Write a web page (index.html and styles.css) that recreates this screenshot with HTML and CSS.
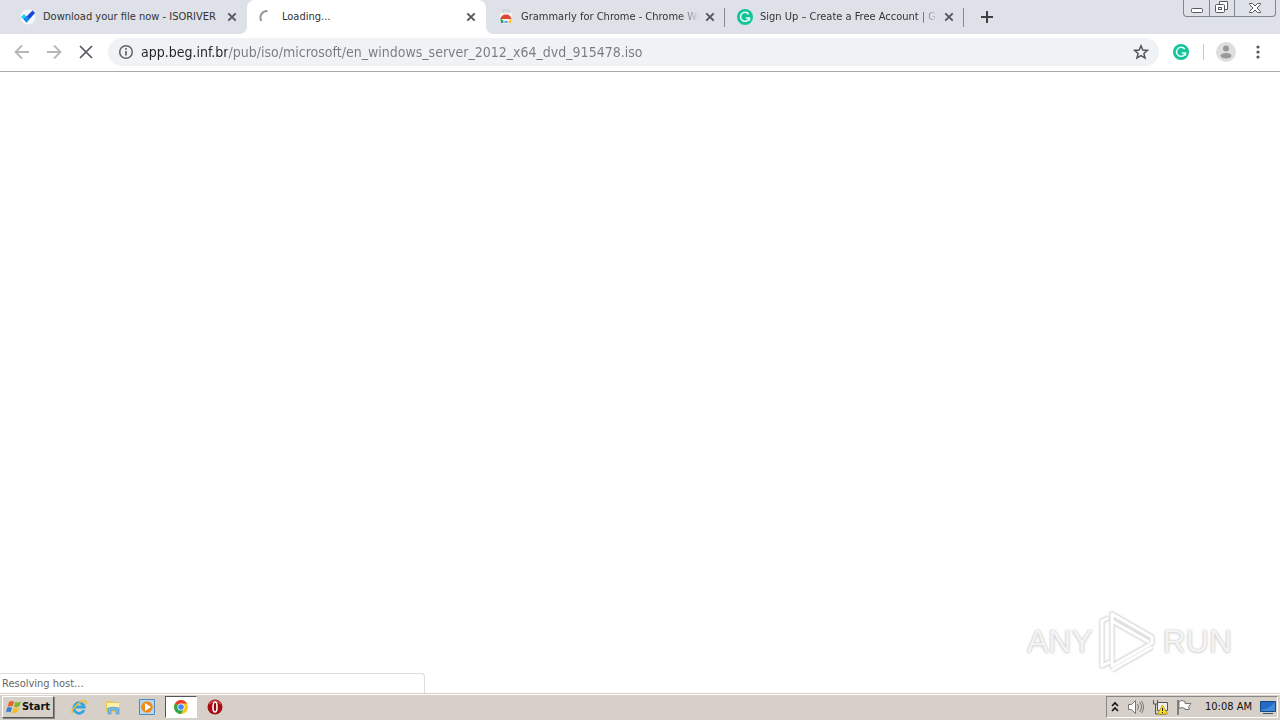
FILE: index.html
```html
<!DOCTYPE html>
<html lang="en">
<head>
<meta charset="utf-8">
<title>Loading...</title>
<link rel="stylesheet" href="styles.css">
</head>
<body>
<svg class="defs" aria-hidden="true">
  <symbol id="close" viewBox="0 0 10 10"><path d="M1.3 1.3 8.7 8.7M8.7 1.3 1.3 8.7" stroke="#51565c" stroke-width="1.9"/></symbol>
  <symbol id="grammarly" viewBox="0 0 16 16"><circle cx="8" cy="8" r="8" fill="#15c39a"/><path d="M11.7 5.2A4.5 4.5 0 1 0 12.4 9H8.8M12.4 8.5v3.2" fill="none" stroke="#e9fff8" stroke-width="1.5"/></symbol>
  <symbol id="chrome" viewBox="0 0 16 16"><circle cx="8" cy="8" r="7" fill="#fbc816"/><path d="M8 8 2 4.500A7 7 0 0 1 14 4.500H8Z" fill="#e53d30"/><path d="M8 8 2 4.500A7 7 0 0 0 8 15l3-5.200Z" fill="#2da44e"/><circle cx="8" cy="8" r="3.6" fill="#fff"/><circle cx="8" cy="8" r="2.8" fill="#4285f4"/></symbol>
</svg>
<header>
  <div class="tabstrip">
    <div class="tab">
      <svg class="favicon" viewBox="0 0 16 16"><circle cx="8" cy="8" r="7.5" fill="#f4f7fa"/><path d="m1 8 3-3 3 3-1 5Z" fill="#20cdf5"/><path d="m4 10 8.5-8.5L15 4 6.5 13.5Z" fill="#1746d8"/><path d="m4 10 3-3 2.5 2.8-3 3.7Z" fill="#1589ee"/></svg>
      <span class="title">Download your file now - ISORIVER</span>
      <button class="close" aria-label="Close tab"><svg><use href="#close"/></svg></button>
    </div>
    <div class="tab active">
      <svg class="favicon" viewBox="0 0 16 16"><path d="M2.5 12A6.5 6.5 0 0 1 8.5 2" fill="none" stroke="#999" stroke-width="2"/></svg>
      <span class="title">Loading...</span>
      <button class="close" aria-label="Close tab"><svg><use href="#close"/></svg></button>
    </div>
    <div class="tab divided">
      <svg class="favicon" viewBox="0 0 16 16"><path d="M5 4V1h6v3" fill="none" stroke="#ccc"/><path d="M2 4h12l-1 10H3Z" fill="#f5f5f5"/><path d="M2.500 10a5.600 5.600 0 0 1 11 0Z" fill="#df4634"/><path d="M2.400 9 8 14H3Z" fill="#29a65a"/><path d="M13.600 9 8 14h5Z" fill="#f9c52b"/><path d="M5.500 14a2.500 2.500 0 0 1 5 0Z" fill="#4285f4" stroke="#fff" stroke-width=".7"/></svg>
      <span class="title fade">Grammarly for Chrome - Chrome Web Store</span>
      <button class="close" aria-label="Close tab"><svg><use href="#close"/></svg></button>
    </div>
    <div class="tab divided">
      <svg class="favicon"><use href="#grammarly"/></svg>
      <span class="title fade">Sign Up – Create a Free Account | Grammarly</span>
      <button class="close" aria-label="Close tab"><svg><use href="#close"/></svg></button>
    </div>
    <button class="newtab" aria-label="New tab"><svg viewBox="0 0 12 12"><path d="M6 0v12M0 6h12" stroke="#3c4043" stroke-width="2"/></svg></button>
    <div class="caption">
      <button aria-label="Minimize"><svg viewBox="0 0 24 16"><rect x="6.5" y="8.5" width="11" height="4" rx="1" fill="#fff" stroke="#555b66"/></svg></button>
      <button aria-label="Restore"><svg viewBox="0 0 24 16"><path d="M9.5 4V1.500h8v8H15" fill="#fff" stroke="#555b66"/><rect x="5.500" y="4.500" width="9" height="8" rx="1" fill="#fff" stroke="#555b66"/><rect x="8.500" y="7.500" width="3" height="2" fill="#fff" stroke="#555b66"/></svg></button>
      <button class="wide" aria-label="Close"><svg viewBox="0 0 24 16"><path d="M6.500 3.500H9.500l2.500 2.500 2.500-2.500h3v1L14 8l3.500 3.500v1h-3L12 10l-2.500 2.500h-3v-1L10 8 6.500 4.500Z" fill="#fff" stroke="#555b66"/></svg></button>
    </div>
  </div>
  <div class="toolbar">
    <button aria-label="Back"><svg viewBox="0 0 16 16"><path d="M15 8H2M8 1.500 1.500 8 8 14.500" fill="none" stroke="#b5b7b9" stroke-width="1.800"/></svg></button>
    <button aria-label="Forward"><svg viewBox="0 0 16 16"><path d="M1 8h13M8 1.500 14.500 8 8 14.500" fill="none" stroke="#b5b7b9" stroke-width="1.800"/></svg></button>
    <button aria-label="Stop"><svg viewBox="0 0 16 16"><path d="m2 2 12 12M14 2 2 14" stroke="#55585c" stroke-width="1.700"/></svg></button>
    <div class="omnibox">
      <button aria-label="Site information"><svg viewBox="0 0 16 16"><circle cx="8" cy="8" r="6.300" fill="none" stroke="#5f6368" stroke-width="1.500"/><path d="M8 7v4.500M8 4v1.700" stroke="#5f6368" stroke-width="1.700"/></svg></button>
      <input class="url" type="text" aria-label="Address" value="app.beg.inf.br/pub/iso/microsoft/en_windows_server_2012_x64_dvd_915478.iso">
      <button aria-label="Bookmark"><svg viewBox="0 0 16 16"><path d="m8 1.800 1.800 4.200 4.600.4-3.500 3 1.100 4.500L8 11.500l-4 2.400 1.100-4.500-3.500-3 4.600-.4Z" fill="none" stroke="#50545a" stroke-width="1.500"/></svg></button>
    </div>
    <button class="extension" aria-label="Grammarly"><svg><use href="#grammarly"/></svg></button>
    <span class="rule"></span>
    <button class="profile" aria-label="Profile"><svg viewBox="0 0 20 20"><circle cx="10" cy="10" r="10" fill="#dedede"/><circle cx="10" cy="6.500" r="3" fill="#999"/><ellipse cx="10" cy="13.800" rx="5.500" ry="2.800" fill="#999"/></svg></button>
    <button aria-label="Menu"><svg viewBox="0 0 16 16" fill="#55585c"><circle cx="8" cy="3" r="1.600"/><circle cx="8" cy="8" r="1.600"/><circle cx="8" cy="13" r="1.600"/></svg></button>
  </div>
</header>
<main>
  <div class="watermark"><span>ANY</span>
    <svg viewBox="0 0 60 64"><g fill="none" stroke-linejoin="round"><g stroke="#dedede" stroke-width="5"><path d="M14 50V5l40 23v6L14 57Z"/><path d="M14 12 51 33M10 9 4 12v45l8-4M14 61 54 38"/></g><g stroke="#fff" stroke-width="3"><path d="M14 50V5l40 23v6L14 57Z"/><path d="M14 12 51 33M10 9 4 12v45l8-4M14 61 54 38"/></g></g></svg>
    <span>RUN</span></div>
  <div class="status">Resolving host...</div>
</main>
<footer>
  <button class="start"><svg viewBox="0 0 16 16"><path d="M3 3q3-2 5 0L6.500 7.500q-2-1-5 .5Z" fill="#e66031"/><path d="M9 3q3 1 6-.5L13.500 7q-3 2-5.500.5Z" fill="#81b72c"/><path d="M1 9q3-2 5 0l-1.500 4.500q-2-1.500-4.500 0Z" fill="#3a80cf"/><path d="M7.500 8.500q3 1.500 5.500 0L11.500 13q-3 2-5.500.5Z" fill="#f7bd26"/></svg>Start</button>
  <nav>
    <button aria-label="Internet Explorer"><svg viewBox="0 0 16 16"><path d="M13 11a5.300 5.300 0 1 1 .3-3H4" fill="none" stroke="#35a5df" stroke-width="2.800"/><path d="M1.500 14.500C-1 11 11-1 15 2.500q1 1-.5 3" fill="none" stroke="#e9bd37" stroke-width="1.400"/></svg></button>
    <button aria-label="Explorer"><svg viewBox="0 0 16 16"><path d="M1 2h5l1 1h7v10H1Z" fill="#e8c75b"/><path d="M2 4h12v5H2Z" fill="#fff1a9"/><path d="M3 15V9q5-2 11 0v6h-3v-4H6v4Z" fill="#79bbe2" stroke="#4b93bd" stroke-width=".6"/></svg></button>
    <button aria-label="Media Player"><svg viewBox="0 0 16 16"><path d="M.5.500h15v15H.5Z" fill="#b8d7ef" stroke="#4d8cc2"/><circle cx="8" cy="8" r="5.800" fill="#f08b1d"/><path d="m6 4 6 4-6 4Z" fill="#fff"/></svg></button>
    <button class="pressed" aria-label="Chrome"><svg><use href="#chrome"/></svg></button>
    <button aria-label="Opera"><svg viewBox="0 0 16 16"><circle cx="8" cy="8" r="7.500" fill="#a60c12"/><path d="M2 5q5-6 12 0" fill="none" stroke="#d7494b" stroke-width="1.500"/><ellipse cx="8" cy="8" rx="2" ry="5" fill="#8c080d" stroke="#fff" stroke-width="1.600"/></svg></button>
  </nav>
  <div class="tray">
    <button aria-label="Show hidden icons"><svg class="small" viewBox="0 0 10 16"><path d="m2 7 3-3 3 3M2 12l3-3 3 3" fill="none" stroke="#111" stroke-width="1.600"/></svg></button>
    <svg viewBox="0 0 16 16"><path d="M.5 5.500h3l4-4v13l-4-4h-3Z" fill="#fff" stroke="#777"/><path d="M9.500 5q2 3 0 6M11.500 3q4 5 0 10M13.500 2q4 6 0 12" fill="none" stroke="#777"/></svg>
    <svg viewBox="0 0 16 16"><path d="M5.500 3.500h10v8h-10ZM7 15h7" fill="#eee" stroke="#555"/><path d="M1.500 1v4h4V1M3.500 5v10h3" fill="none" stroke="#555"/><path d="m10.500 6 5 9h-10Z" fill="#ffdb21" stroke="#ad9100" stroke-width=".7"/><path d="M10.500 9v3M10.500 13v1" stroke="#222"/></svg>
    <svg viewBox="0 0 16 16"><path d="M2 1v15" stroke="#666" stroke-width="1.500"/><path d="M3 2.500q3-2 6 0v2h6L12.500 8l1 2.500H9v-1q-3-2-6 0Z" fill="#fff" stroke="#777"/></svg>
    <time>10:08 AM</time>
    <svg viewBox="0 0 16 16"><path d="M.5 2.500h15v10H.5Z" fill="#246ac4" stroke="#174780"/><path d="M1 11Q9 10 15 3v9H1Z" fill="#4288d8"/><path d="M3 14.500h10" stroke="#355779"/></svg>
  </div>
</footer>
</body>
</html>
```
FILE: styles.css
```css
* { box-sizing: border-box; }
body { margin: 0; min-height: 100vh; display: flex; flex-direction: column; background: #fff; color: #333; font: 11px/16px "DejaVu Sans Condensed", "DejaVu Sans", sans-serif; }
button { display: flex; align-items: center; justify-content: center; flex: none; padding: 0; border: 0; background: none; color: inherit; font: inherit; }
svg { display: block; flex: none; width: 16px; height: 16px; }
.defs { position: absolute; width: 0; height: 0; }
.tabstrip { display: flex; height: 34px; padding-left: 8px; background: #dee1e7; }
.tab { position: relative; display: flex; flex: 0 1 239px; min-width: 0; align-items: center; padding: 0 8px 0 12px; }
.tab.active { background: #fff; border-radius: 8px 8px 0 0; }
.tab.active::before, .tab.active::after { content: ""; position: absolute; bottom: 0; width: 8px; height: 8px; }
.tab.active::before { right: 100%; background: radial-gradient(circle at 0 0, transparent 8px, #fff 8px); }
.tab.active::after { left: 100%; background: radial-gradient(circle at 100% 0, transparent 8px, #fff 8px); }
.divided::after { content: ""; position: absolute; right: 0; top: 8px; width: 1px; height: 19px; background: #858a91; }
.title { flex: 1; margin: 0 4px 0 7px; overflow: hidden; white-space: nowrap; }
.fade { mask-image: linear-gradient(90deg, #000 calc(100% - 20px), transparent); }
.close { width: 14px; height: 16px; }
.close svg { width: 10px; height: 10px; }
.newtab { width: 46px; }
.newtab svg { width: 12px; height: 12px; }
.caption { display: flex; height: 17px; margin: 0 4px 0 auto; border: 1px solid #7f858f; border-top: 0; border-radius: 0 0 4px 4px; }
.caption button { width: 25px; }
.caption .wide { width: 41px; }
.caption button + button { border-left: 1px solid #7f858f; }
.caption svg { width: 24px; }
.toolbar { display: flex; align-items: center; height: 38px; padding: 0 14px 1px; gap: 16px; border-bottom: 1px solid #aaa; }
.omnibox { display: flex; flex: 1; align-items: center; height: 28px; margin: 0 -2px; padding: 0 10px; border-radius: 14px; background: #eff3f6; }
.url { flex: 1; min-width: 0; height: 24px; margin: 0 7px; padding: 0; border: 0; outline: 0; color: transparent; background: linear-gradient(90deg, #222 86px, #777b80 86px); background-clip: text; font: 200 14px "DejaVu Sans Condensed", "DejaVu Sans", sans-serif; }
.rule { width: 1px; height: 16px; margin: 0 -4px 0 -2px; background: #c8c8c8; }
.profile { margin-right: -2px; }
.profile svg { width: 20px; height: 20px; }
main { position: relative; display: flex; flex: 1; align-items: flex-end; }
.status { width: 425px; height: 20px; padding: 2px; border: 1px solid #ddd; border-width: 1px 1px 0 0; border-radius: 0 4px 0 0; color: #666; }
.watermark { position: absolute; right: 48px; bottom: 20px; display: flex; align-items: center; gap: 5px; color: #f4f4f4; font: 32px/64px "Liberation Sans Narrow", "Liberation Sans", sans-serif; text-shadow: 0 0 2px #bbb, 0 1px 3px #ddd; }
.watermark svg { width: 60px; height: 64px; filter: drop-shadow(0 0 1px #ddd); }
footer { display: flex; align-items: center; height: 27px; padding: 0 2px; border-top: 1px solid #d4d0c8; background: #d6d0c8; box-shadow: inset 0 1px #fff; color: #111; }
.start { width: 52px; height: 22px; border: 1px solid; border-color: #fff #555 #555 #fff; box-shadow: 1px 1px #888; font-weight: 700; }
nav { display: flex; margin-left: 9px; gap: 2px; }
nav button { width: 32px; height: 22px; }
nav .pressed { border: 1px solid; border-color: #555 #fff #fff #555; background: #fff; }
.tray { display: flex; align-items: center; height: 22px; margin-left: auto; padding: 0 1px 0 3px; gap: 8px; border: 1px solid; border-color: #888 #fff #fff #888; }
.tray .small { width: 10px; }
time { margin-left: 5px; }
```
